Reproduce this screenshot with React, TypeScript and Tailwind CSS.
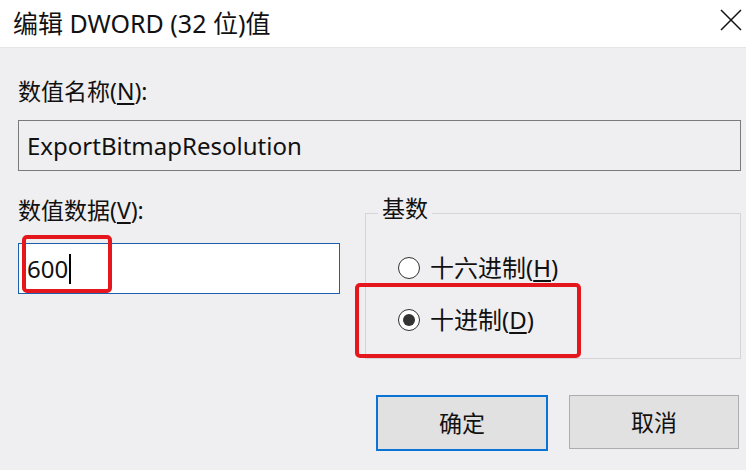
import React from 'react';

const font = { fontFamily: '"Noto Sans", "Noto Sans CJK SC", sans-serif' };

function Radio({ checked, label, hotkey }: { checked?: boolean; label: string; hotkey: string }) {
  return (
    <div className="flex items-center h-[30px]">
      <span className="w-[22px] h-[22px] rounded-full border-[1.5px] border-[#333] bg-white flex items-center justify-center">
        {checked && <span className="w-[12px] h-[12px] rounded-full bg-[#333]" />}
      </span>
      <span className="ml-[10px] text-[24px] text-[#111]">
        {label}(<span className="underline underline-offset-[3px]">{hotkey}</span>)
      </span>
    </div>
  );
}

export default function App() {
  return (
    <div className="relative w-[746px] h-[470px] overflow-hidden bg-[#efeef0] text-[#111]" style={font}>
      {/* title bar */}
      <div className="h-[48px] bg-white flex items-center justify-between pl-[13px] pr-[4px] border-b border-[#e6e6e8]">
        <span className="text-[25px] leading-none">编辑 DWORD (32 位)值</span>
        <svg width="22" height="22" viewBox="0 0 22 22" className="mb-[8px]">
          <path d="M1 1 L21 21 M21 1 L1 21" stroke="#111" strokeWidth="1.5" fill="none" />
        </svg>
      </div>

      <div className="pl-[18px] pr-[5px]">
        <div className="pt-[28px] h-[72px] text-[23px] leading-[30px]">
          数值名称(<span className="underline underline-offset-[3px]">N</span>):
        </div>
        <div className="h-[51px] border border-[#7a7a7a] flex items-center pl-[8px] text-[24px]">
          ExportBitmapResolution
        </div>

        <div className="flex mt-[28px]">
          <div className="w-[322px]">
            <div className="h-[44px] text-[23px] leading-[30px] -mt-[4px] mb-[4px]">
              数值数据(<span className="underline underline-offset-[3px]">V</span>):
            </div>
            <div className="h-[51px] border border-[#1b5fae] bg-white flex items-center pl-[8px] text-[24px]">
              600<span className="inline-block w-[2px] h-[30px] bg-black ml-[1px]" />
            </div>
          </div>
          <div className="ml-[25px] flex-1 relative pt-[14px]">
            <div className="h-[146px] border border-[#d5d5d7] pl-[32px] pt-[39px] flex flex-col gap-[22px]">
              <Radio label="十六进制" hotkey="H" />
              <Radio checked label="十进制" hotkey="D" />
            </div>
            <span className="absolute left-[13px] top-[-6px] px-[4px] bg-[#efeef0] text-[23px] leading-[30px]">基数</span>
          </div>
        </div>

        <div className="flex justify-end gap-[21px] mt-[36px] pr-[2px]">
          <button className="w-[172px] h-[56px] border-2 border-[#0a74d6] bg-[#e1e1e1] text-[23px] flex items-center justify-center">
            确定
          </button>
          <button className="w-[170px] h-[54px] border border-[#adadad] bg-[#e1e1e1] text-[23px] flex items-center justify-center">
            取消
          </button>
        </div>
      </div>

      {/* red annotation boxes */}
      <div className="absolute left-[22px] top-[235px] w-[90px] h-[58px] border-4 border-[#e5161c] rounded-[5px]" />
      <div className="absolute left-[355px] top-[283px] w-[226px] h-[75px] border-4 border-[#e5161c] rounded-[5px]" />
    </div>
  );
}
